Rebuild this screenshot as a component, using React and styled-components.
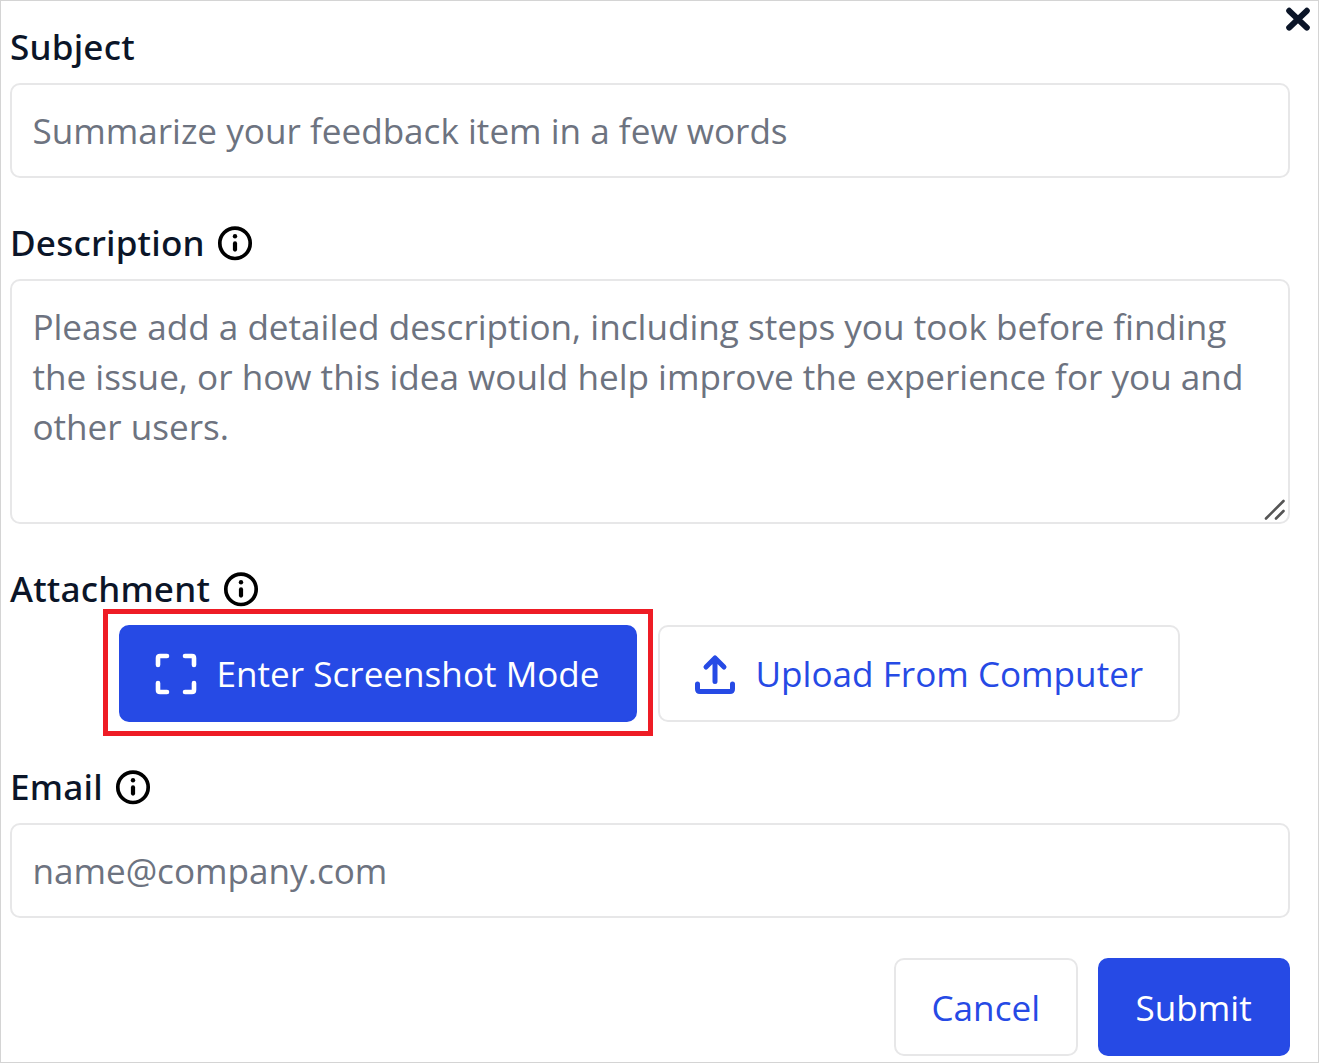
import React from "react";
import styled, { createGlobalStyle } from "styled-components";

const GlobalStyle = createGlobalStyle`
  *, *::before, *::after { box-sizing: border-box; }
  body { margin: 0; background: #fff; }
`;

const Dialog = styled.form`
  position: relative;
  display: flex;
  flex-direction: column;
  width: 1319px;
  height: 1063px;
  padding: 20px 28px 0 9px;
  border: 1px solid #d4d4d4;
  background: #fff;
  font-family: "Open Sans", sans-serif;
  font-size: 35.12px;
  line-height: 50px;
  color: #0b1528;
  overflow: hidden;
`;

const CloseButton = styled.button`
  position: absolute;
  top: 6px;
  right: 8px;
  width: 24px;
  height: 24px;
  padding: 0;
  border: 0;
  background: none;
  svg { display: block; }
`;

const Field = styled.section`
  display: flex;
  flex-direction: column;
  gap: 12px;
  margin-bottom: ${(p) => p.$after}px;
`;

const Label = styled.label`
  display: flex;
  align-items: center;
  gap: ${(p) => p.$gap || 12}px;
  height: 50px;
  font-family: "Noto Sans", sans-serif;
  font-weight: 500;
  letter-spacing: 0.2px;
  white-space: nowrap;
  svg { display: block; flex: none; margin-top: 2px; }
`;

const Box = styled.div`
  position: relative;
  width: 1280px;
  height: ${(p) => p.$height}px;
  padding: 20px 20px 0 20.4px;
  border: 2px solid #e7e7e8;
  border-radius: 10px;
  color: #6d7380;
  white-space: nowrap;
`;

const Line = styled.div`
  height: 50px;
`;

const Grip = styled.svg`
  position: absolute;
  right: 1px;
  bottom: 0;
`;

const Actions = styled.div`
  display: flex;
  gap: ${(p) => p.$gap || 20}px;
  padding-left: ${(p) => p.$left || 0}px;
  justify-content: ${(p) => (p.$end ? "flex-end" : "flex-start")};
`;

const Button = styled.button`
  display: flex;
  align-items: center;
  width: ${(p) => p.$width}px;
  height: ${(p) => p.$height || 98}px;
  padding: 0 0 ${(p) => p.$lift || 0}px ${(p) => p.$pad}px;
  gap: ${(p) => p.$iconGap || 20}px;
  border: 2px solid ${(p) => (p.$primary ? "#264ae5" : "#e7e7e8")};
  border-radius: 10px;
  background: ${(p) => (p.$primary ? "#264ae5" : "#fff")};
  color: ${(p) => (p.$primary ? "#fff" : "#264ae5")};
  font: inherit;
  white-space: nowrap;
  svg { display: block; flex: none; margin-top: 1px; }
`;

const Highlighted = styled.div`
  position: relative;
  &::after {
    content: "";
    position: absolute;
    inset: -16px -16px -14px -16px;
    border: 5px solid #ee1c25;
    pointer-events: none;
  }
`;

const InfoIcon = () => (
  <svg width="36" height="36" viewBox="0 0 36 36">
    <circle cx="18" cy="18.3" r="15.2" fill="none" stroke="#000" strokeWidth="3.7" />
    <circle cx="18" cy="11.2" r="2.2" />
    <path d="M18 18.4v6.2" stroke="#000" strokeWidth="4.2" strokeLinecap="round" />
  </svg>
);

const CloseIcon = () => (
  <svg width="24" height="24" viewBox="0 0 24 24">
    <path d="M3.2 3.8l17.6 16.8M20.8 3.8L3.2 20.6" stroke="#0b1528" strokeWidth="6" strokeLinecap="round" />
  </svg>
);

const FrameIcon = () => (
  <svg width="42" height="42" viewBox="0 0 42 42" fill="none" stroke="currentColor" strokeWidth="4.6" strokeLinecap="round" strokeLinejoin="round">
    <path d="M3 12V5q0-2 2-2h7M30 3h7q2 0 2 2v7M3 30v7q0 2 2 2h7M39 30v7q0 2-2 2h-7" />
  </svg>
);

const UploadIcon = () => (
  <svg width="42" height="42" viewBox="0 0 42 42" fill="none" stroke="currentColor" strokeWidth="5" strokeLinecap="round" strokeLinejoin="round">
    <path d="M21 28.5V5M12 14L21 5l9 9M3.5 31v5q0 2.5 2.5 2.5h30q2.5 0 2.5-2.5v-5" />
  </svg>
);

export default function App() {
  return (
    <>
      <GlobalStyle />
      <Dialog>
        <CloseButton type="button" aria-label="Close"><CloseIcon /></CloseButton>
        <Field $after={39}>
          <Label>Subject</Label>
          <Box $height={95}><Line>Summarize your feedback item in a few words</Line></Box>
        </Field>
        <Field $after={39}>
          <Label>Description <InfoIcon /></Label>
          <Box $height={245}>
            <Line>Please add a detailed description, including steps you took before finding</Line>
            <Line>the issue, or how this idea would help improve the experience for you and</Line>
            <Line>other users.</Line>
            <Grip width="24" height="24" viewBox="0 0 24 24" stroke="#555" strokeWidth="2.6" strokeLinecap="round">
              <path d="M3 20.5L20.5 3M13 20.5L20.5 13" />
            </Grip>
          </Box>
        </Field>
        <Field $after={39}>
          <Label $gap={13}>Attachment <InfoIcon /></Label>
          <Actions $left={108.5} $gap={20.5}>
            <Highlighted>
              <Button type="button" $primary $width={518.5} $height={97} $pad={34.5} $iconGap={19.5} $lift={1}><FrameIcon />Enter Screenshot Mode</Button>
            </Highlighted>
            <Button type="button" $width={522} $height={97} $pad={34} $iconGap={20} $lift={1}><UploadIcon />Upload From Computer</Button>
          </Actions>
        </Field>
        <Field $after={40}>
          <Label>Email <InfoIcon /></Label>
          <Box $height={95}><Line>name@company.com</Line></Box>
        </Field>
        <Actions $end>
          <Button type="button" $width={184.5} $pad={36}>Cancel</Button>
          <Button type="button" $primary $width={192} $pad={35.5}>Submit</Button>
        </Actions>
      </Dialog>
    </>
  );
}
